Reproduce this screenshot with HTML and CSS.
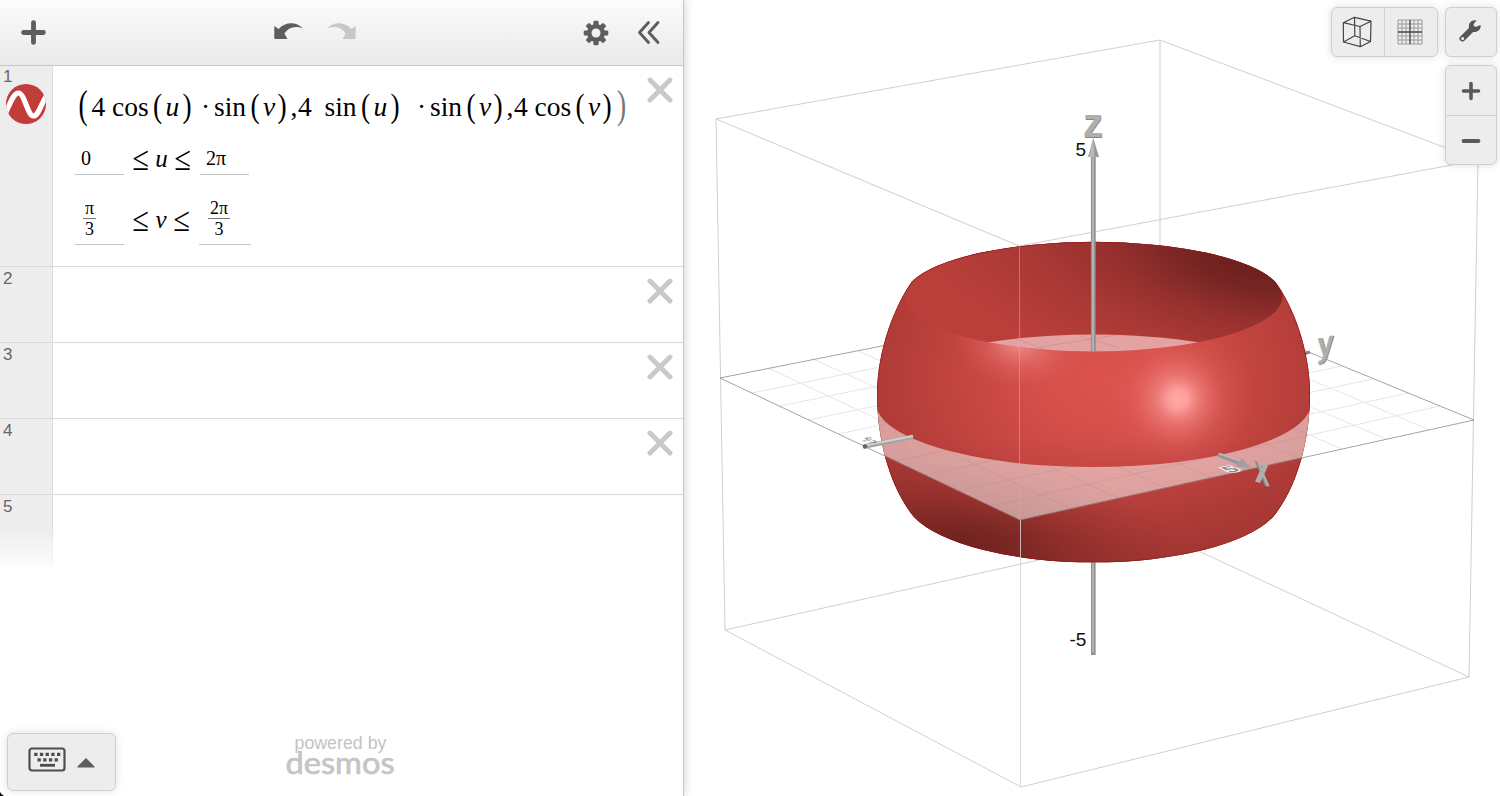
FILE: index.html
```
<!DOCTYPE html>
<html lang="en">
<head>
<meta charset="utf-8">
<title>Desmos 3D</title>
<link rel="stylesheet" href="styles.css">
</head>
<body>
<svg class="defs" width="0" height="0">
  <symbol id="close" viewBox="0 0 26 26"><path d="M3 3 23 23M23 3 3 23" stroke="#c9c9c9" stroke-width="4.900" stroke-linecap="round"/></symbol>
</svg>
<div class="app">
  <section class="panel">
    <header class="toolbar">
      <svg class="ic-add" width="25" height="25" viewBox="0 0 25 25"><path d="M12.500 2.600V22.400M2.600 12.500H22.400" stroke="#5d5d5d" stroke-width="4.800" stroke-linecap="round"/></svg>
      <svg class="ic-undo" width="30" height="18" viewBox="0 0 30 18"><path d="M.3 4 4.600 7C11 0 22-1 29 6.500 21 3.500 15 5 10.300 11.500L13.500 17H1.200Q.3 17 .3 16Z" fill="#5d5d5d"/></svg>
      <svg class="ic-redo" width="30" height="18" viewBox="0 0 30 18"><path d="M29.700 4 25.400 7C19 0 8-1 1 6.500 9 3.500 15 5 19.700 11.500L16.500 17H28.800Q29.700 17 29.700 16Z" fill="#c8c8c8"/></svg>
      <svg class="ic-gear" width="26" height="26" viewBox="-13 -13 26 26"><g fill="#5d5d5d"><circle r="9"/><g id="t"><rect x="-2.600" y="-12.300" width="5.200" height="24.600" rx="1.300"/><rect x="-12.300" y="-2.600" width="24.600" height="5.200" rx="1.300"/></g><use href="#t" transform="rotate(45)"/></g><circle r="4.500" fill="#f2f2f2"/></svg>
      <svg class="ic-chev" width="24" height="25" viewBox="0 0 24 25"><path d="M11.500 2.500 2.500 12.500 11.500 22.500M21 2.500 12 12.500 21 22.500" fill="none" stroke="#5d5d5d" stroke-width="2.900" stroke-linecap="round" stroke-linejoin="round"/></svg>
    </header>
    <div class="row first">
      <div class="gutter"><span class="num">1</span>
        <svg class="badge" width="42" height="42" viewBox="0 0 42 42"><defs><clipPath id="bc"><circle cx="21" cy="21" r="20"/></clipPath></defs><circle cx="21" cy="21" r="20" fill="#c23d3a"/><path clip-path="url(#bc)" d="M0 31C5 22 8 10 13.500 10 19.500 10 22.500 33 28.500 33 33.500 33 36 21 42 12" fill="none" stroke="#fff" stroke-width="5.200"/></svg>
      </div>
      <div class="expr">
        <div class="formula"><span class="w13 p big">(</span><span class="w20">4</span><span class="w41">cos</span><span class="w12 p">(</span><span class="w17 i">u</span><span class="w19 p">)</span><span class="w13">·</span><span class="w37">sin</span><span class="w12 p">(</span><span class="w15 i">v</span><span class="w13 p">)</span><span class="w7">,</span><span class="w27">4</span><span class="w37">sin</span><span class="w12 p">(</span><span class="w17 i">u</span><span class="w26 p">)</span><span class="w13">·</span><span class="w37">sin</span><span class="w12 p">(</span><span class="w15 i">v</span><span class="w13 p">)</span><span class="w7">,</span><span class="w20">4</span><span class="w41">cos</span><span class="w12 p">(</span><span class="w15 i">v</span><span class="w15 p">)</span><span class="w13 p big ghost">)</span></div>
        <div class="domain d1"><span class="bound">0</span><span class="rel"><b>≤</b><i>u</i><b>≤</b></span><span class="bound">2π</span></div>
        <div class="domain d2"><span class="bound fr"><span class="frac"><b>π</b><b>3</b></span></span><span class="rel"><b>≤</b><i>v</i><b>≤</b></span><span class="bound fr wide"><span class="frac"><b>2π</b><b>3</b></span></span></div>
      </div>
      <svg class="x" width="26" height="26"><use href="#close"/></svg>
    </div>
    <div class="row"><div class="gutter"><span class="num">2</span></div><div class="expr"></div><svg class="x" width="26" height="26"><use href="#close"/></svg></div>
    <div class="row"><div class="gutter"><span class="num">3</span></div><div class="expr"></div><svg class="x" width="26" height="26"><use href="#close"/></svg></div>
    <div class="row"><div class="gutter"><span class="num">4</span></div><div class="expr"></div><svg class="x" width="26" height="26"><use href="#close"/></svg></div>
    <div class="row last"><div class="gutter"><span class="num">5</span></div><div class="expr"></div></div>
    <footer class="foot">
      <div class="keypad">
        <svg width="38" height="25" viewBox="0 0 38 25"><rect x="1.500" y="1.500" width="35" height="22" rx="2.500" fill="none" stroke="#4d4d4d" stroke-width="2.200"/><path d="M6.200 7.300H32.500M9.500 12.800H30" stroke="#4d4d4d" stroke-width="3.200" stroke-dasharray="3.300 2.400"/><path d="M12 18.300H27" stroke="#4d4d4d" stroke-width="2.800"/></svg>
        <svg width="18" height="10" viewBox="0 0 18 10"><path d="M9 0 17.500 8.500Q18 9.500 17 9.500H1Q0 9.500.5 8.500Z" fill="#5d5d5d"/></svg>
      </div>
      <div class="brand"><span>powered by</span>
        <svg width="112" height="28" viewBox="0 0 112 28"><text class="logo" x="0.500" y="25" textLength="109" lengthAdjust="spacingAndGlyphs">desmos</text></svg>
      </div>
    </footer>
  </section>
  <main class="view">
    <svg class="scene" width="816" height="796" viewBox="684 0 816 796">
      <defs>
        <radialGradient id="inner" gradientUnits="userSpaceOnUse" cx="0" cy="0" r="1" gradientTransform="translate(1248 262) rotate(12) scale(350 140)">
          <stop offset="0" stop-color="#6a1f1c"/><stop offset=".18" stop-color="#772523"/><stop offset=".42" stop-color="#97312e"/><stop offset=".65" stop-color="#a93834"/><stop offset="1" stop-color="#ba3f3b"/></radialGradient>
        <radialGradient id="outer" gradientUnits="userSpaceOnUse" cx="0" cy="0" r="1" gradientTransform="translate(1105 378) scale(228 185)">
          <stop offset="0" stop-color="#dd534e"/><stop offset=".3" stop-color="#d54f4a"/><stop offset=".65" stop-color="#c24440"/><stop offset="1" stop-color="#b03b37"/></radialGradient>
        <radialGradient id="spot" gradientUnits="userSpaceOnUse" cx="1178" cy="399" r="80">
          <stop offset="0" stop-color="#ffaaa8"/><stop offset=".12" stop-color="#ffa5a3" stop-opacity=".92"/><stop offset=".3" stop-color="#f78a87" stop-opacity=".62"/><stop offset=".6" stop-color="#e96a66" stop-opacity=".26"/><stop offset="1" stop-color="#dc524d" stop-opacity="0"/></radialGradient>
        <radialGradient id="spot2" gradientUnits="userSpaceOnUse" cx="0" cy="0" r="1" gradientTransform="translate(1018 345) rotate(12) scale(68 46)">
          <stop offset="0" stop-color="#f59a96" stop-opacity=".8"/><stop offset=".45" stop-color="#e97874" stop-opacity=".42"/><stop offset="1" stop-color="#dc524d" stop-opacity="0"/></radialGradient>
        <radialGradient id="shade" gradientUnits="userSpaceOnUse" cx="0" cy="0" r="1" gradientTransform="translate(965 543) rotate(8) scale(240 92)">
          <stop offset="0" stop-color="#5e1b18" stop-opacity=".76"/><stop offset=".25" stop-color="#66201c" stop-opacity=".63"/><stop offset=".6" stop-color="#7f2724" stop-opacity=".36"/><stop offset="1" stop-color="#8f2f2b" stop-opacity="0"/></radialGradient>
        <linearGradient id="under" x1="0" y1="440" x2="0" y2="562" gradientUnits="userSpaceOnUse"><stop offset="0" stop-color="#8f2f2b" stop-opacity="0"/><stop offset="1" stop-color="#8f2f2b" stop-opacity=".4"/></linearGradient>
        <path id="shape" d="M912 281.500C895 305 877 350 877 394 877 440 890 488 914 517A189 66 0 0 0 1273 517C1297 488 1310 440 1310 394 1310 350 1293 305 1275 281.500A189 55 0 0 0 912 281.500Z"/>
        <clipPath id="body"><use href="#shape"/></clipPath>
        <clipPath id="band"><path d="M876 403A217 64 0 0 0 1311 403V456L1301 458 1020 520 885 456H870Z"/></clipPath>
        <clipPath id="rim"><ellipse cx="1093.500" cy="296.500" rx="189" ry="55"/></clipPath>
        <clipPath id="lens"><ellipse cx="1093.500" cy="397" rx="217" ry="62.500"/></clipPath>
        <g id="grid" fill="none" stroke-width="1">
          <path d="M752 393 1192 304M780 406 1221 316M808 420 1250 328M838 434 1279 340M865 447 1309 352M895 461 1342 366M926 475 1373 379M958 491 1408 393M991 506 1440 406"/>
          <path d="M768 368 1071 509M813 359 1119 498M858 351 1166 488M902 342 1212 478M946 333 1255 468M990 325 1299 458M1033 316 1342 449M1076 307 1386 439M1118 299 1430 430"/>
        </g>
      </defs>
      <g fill="none" stroke="#cfcfcf">
        <path d="M716 119 1160 40 1478 160 1019 246ZM716 119 725 630 1021 787 1469 677 1478 160M1160 40V533M725 630 1160 533 1469 677"/>
      </g>
      <use href="#grid" stroke="#e6e6e6"/>
      <path d="M720 378 1160 291 1474 420 1020 520Z" fill="none" stroke="#a3a3a3"/>
      <path d="M1300 355 1310 352" stroke="#888" stroke-width="3"/>
      <path d="M1093.300 555V655" stroke="#8e8e8e" stroke-width="4.600"/><path d="M1093 555V653" stroke="#b0b0b0" stroke-width="2"/>
      <g clip-path="url(#body)">
        <rect x="870" y="230" width="450" height="340" fill="url(#outer)"/>
        <rect x="870" y="440" width="450" height="130" fill="url(#under)"/>
        <rect x="870" y="400" width="450" height="170" fill="url(#shade)"/>
        <rect x="1080" y="310" width="200" height="180" fill="url(#spot)"/>
        <rect x="930" y="290" width="170" height="120" fill="url(#spot2)"/>
        <ellipse cx="1093.500" cy="296.500" rx="189" ry="55" fill="url(#inner)"/>
        <g clip-path="url(#rim)"><ellipse cx="1093.500" cy="397" rx="217" ry="62.500" fill="#e4a3a2"/><g clip-path="url(#lens)"><path d="M1015 338 1048 351M1040 347 1130 333M1080 336 1120 348" stroke="#cf9694"/></g></g>
        <use href="#shape" fill="none" stroke="#8f1715" stroke-width="1.200"/>
        <g clip-path="url(#band)"><rect x="870" y="390" width="450" height="140" fill="#fff" opacity=".51"/><use href="#grid" stroke="#b88482" stroke-opacity=".3"/></g>
      </g>
      <path d="M885 456 1020 520 1301 458" fill="none" stroke="#987170"/>
      <path d="M1019.500 246V520" stroke="#d0aaa7" stroke-opacity=".55"/>
      <path d="M1020.500 520V787" stroke="#d6d0d0" stroke-opacity=".85"/>
      <path d="M1093.300 155V351" stroke="#8c8c8c" stroke-width="4.800"/><path d="M1093 155V351" stroke="#b1b1b1" stroke-width="2.400"/>
      <path d="M1093.300 138 1099 157H1088Z" fill="#999"/><path d="M1093.300 138 1094.500 157H1089Z" fill="#b9b9b9"/>
      <path d="M864 446.500 913 437" stroke="#a5a5a5" stroke-width="4.800"/><path d="M866 445.300 913 436" stroke="#cfcfcf" stroke-width="2"/><circle cx="865" cy="446.500" r="2.300" fill="#666"/>
      <text class="tick" transform="matrix(.95 -.02 .5 .45 864 443)">-5</text>
      <g class="flat"><text transform="matrix(1.200 -.2 .9 .4 1230 472.500)">5</text></g>
      <path d="M1218 454.500 1240 463" stroke="#969696" stroke-width="4.500"/><path d="M1219 453.500 1240 461" stroke="#bbb" stroke-width="1.500"/>
      <path d="M1242 458 1251 469 1235 466Z" fill="#a0a0a0"/>
      <g class="axis"><text class="dark" x="1083.500" y="137.500" font-size="40">z</text><text x="1083" y="136.500" font-size="40">z</text>
        <text class="dark" transform="matrix(.85 -.18 -.03 1.050 1318 358)" font-size="34">y</text><text transform="matrix(.85 -.18 -.03 1.050 1317 357.500)" font-size="34">y</text>
        <path class="dark" d="M1254.500 460.500 1259 463 1269.500 487 1265 486Z"/><path d="M1263.500 463.500 1268 466 1260 483 1255 481.500Z"/><path d="M1256.500 461 1259.500 463 1269.500 486 1266.500 486Z"/></g>
      <g class="label"><text x="1075.500" y="156">5</text><text x="1069.500" y="645.500">-5</text></g>
    </svg>
    <div class="controls">
      <div class="top">
        <div class="pair"><div>
          <svg width="32" height="32" viewBox="0 0 32 32"><path d="M2.300 6.700 13.500 1.300 30 5.200 19 10.500ZM2.300 6.700 2.500 26 19.300 30.700 19 10.500M30 5.200 29.500 25.500 19.300 30.700M13.500 1.300 13.800 19.800 29.500 25.500M13.800 19.800 2.500 26" fill="none" stroke="#444" stroke-width="1.200" stroke-linejoin="round"/></svg>
        </div><div>
          <svg width="26" height="26" viewBox="0 0 26 26"><path d="M1 1H25V25H1ZM5 1V25M9 1V25M17 1V25M21 1V25M1 5H25M1 9H25M1 17H25M1 21H25" fill="none" stroke="#999" stroke-width="1"/><path d="M13 1V25M1 13H25" stroke="#444" stroke-width="1.300"/></svg>
        </div></div>
        <div class="wrench"><svg width="24" height="24" viewBox="0 0 24 24"><path d="M4.500 19.500 14 10" stroke="#555" stroke-width="6" stroke-linecap="round"/><path d="M18.500 1.500C14 .3 10 4 11 9L15 13C20 13.500 23.500 10 22.500 6L17.500 8 15.500 6.500 16 4.500Z" fill="#555"/><circle cx="4.600" cy="19.400" r="1.500" fill="#ededed"/></svg></div>
      </div>
      <div class="zoom">
        <div><svg width="20" height="20" viewBox="0 0 20 20"><path d="M10 2.500V17.500M2.500 10H17.500" stroke="#5a5a5a" stroke-width="3.600" stroke-linecap="round"/></svg></div>
        <div><svg width="20" height="20" viewBox="0 0 20 20"><path d="M2.500 10H17.500" stroke="#5a5a5a" stroke-width="3.800" stroke-linecap="round"/></svg></div>
      </div>
    </div>
  </main>
</div>
</body>
</html>
```
FILE: styles.css
```
* { box-sizing: border-box; }
body { margin: 0; background: #fff; font-family: "Liberation Sans", Arial, sans-serif; overflow: hidden; }
svg { display: block; flex: none; overflow: visible; }
.defs { position: absolute; }
.app { display: flex; width: 1500px; height: 796px; }
.panel { display: flex; flex-direction: column; width: 684px; border-right: 1px solid #c6c6c6; box-shadow: 0 0 10px rgba(0,0,0,.2); background: #fff; z-index: 1; }
.toolbar { display: flex; align-items: center; height: 66px; padding-left: 20.600px; border-bottom: 1px solid #c8c8c8; background: linear-gradient(#fcfcfc, #e9e9e9); flex: none; }
.ic-undo { margin-left: 228.400px; margin-top: -4px; }
.ic-redo { margin-left: 22.500px; margin-top: -4px; }
.ic-gear { margin-left: 227px; }
.ic-chev { margin-left: 28px; }
.row { display: flex; height: 76px; border-bottom: 1px solid #d9d9d9; flex: none; }
.row.first { height: 201px; }
.row.last { border: 0; }
.gutter { width: 53px; background: #ededed; border-right: 1px solid #dcdcdc; padding: 3px 0 0 3px; flex: none; }
.first .gutter { padding-top: 2px; }
.last .gutter { background: linear-gradient(#ededed 45%, #fff); border-image: linear-gradient(#dcdcdc 40%, #fff) 1; border-width: 0 1px 0 0; border-style: solid; }
.num { display: block; font-size: 17px; line-height: 18px; color: #666; }
.badge { margin: -3px 0 0 2px; }
.expr { flex: 1; }
.x { margin: 11px 10px 0 0; }
.formula { display: flex; height: 41px; margin: 20px 0 0 25.500px; font: 27.500px/41px "Liberation Serif", "Times New Roman", serif; color: #000; white-space: nowrap; width: 550px; }
.formula span { display: block; flex: none; }
.i { font-style: italic; }
.formula .p { transform: scaleY(1.22); transform-origin: 50% 60%; }
.formula .big { transform: scaleY(1.45); }
.ghost { color: #777; }
.w7 { width: 7.500px; } .w12 { width: 12.500px; } .w13 { width: 13px; } .w15 { width: 14.500px; }
.w17 { width: 17px; } .w19 { width: 18.500px; } .w20 { width: 20.500px; } .w26 { width: 26.500px; }
.w27 { width: 26.500px; } .w37 { width: 36.500px; } .w41 { width: 41px; }
.domain { display: flex; padding-left: 22px; font-family: "Liberation Serif", "Times New Roman", serif; color: #000; }
.d1 { height: 34px; margin-top: 14px; }
.d2 { height: 50px; margin-top: 20px; }
.bound { width: 49px; padding-left: 6px; border-bottom: 1px solid #c4c4c4; font-size: 20px; line-height: 35px; }
.rel { display: flex; justify-content: space-between; width: 57px; margin: 0 10px 0 9px; font-size: 28px; line-height: 35px; }
.rel b { font-weight: 400; transform: scale(1.080, 1.220); }
.rel i { font-size: 25px; line-height: 36px; }
.d2 .rel { width: 56px; line-height: 49px; }
.d2 .rel i { line-height: 49px; }
.fr { display: flex; align-items: flex-start; padding: 4px 0 0 8px; }
.wide { width: 52px; margin-left: 0; padding-left: 9px; }
.frac { display: grid; font-size: 18px; line-height: 19px; text-align: center; }
.frac b { font-weight: 400; padding: 0 2px; }
.frac b + b { border-top: 1px solid #777; padding-top: 1px; }
.foot { display: flex; margin-top: auto; height: 64px; background: radial-gradient(circle at 7px 0, transparent 7px, #000 8px) 0 57px / 5px 7px no-repeat; flex: none; }
.keypad { display: flex; align-items: center; width: 109px; height: 58px; margin: 1px 0 0 7px; padding: 0 0 5px 20px; gap: 11px; border: 1px solid #cfcfcf; border-radius: 6px; background: #ededed; box-shadow: 0 0 8px rgba(0,0,0,.12); }
.keypad svg + svg { margin-top: 6px; }
.brand { margin: 2px 0 0 169px; color: #c3c3c3; font-size: 17.800px; line-height: 18px; }
.brand span { display: block; margin-left: 9.500px; }
.brand svg { margin-top: -3px; }
.logo { font: 30px Lato, sans-serif; fill: #c5c5c5; stroke: #c5c5c5; stroke-width: .7px; }
.view { position: relative; flex: 1; }
.label { font: 19px "Liberation Sans", Arial, sans-serif; fill: #111; }
.tick { font: 17px "Liberation Sans", Arial, sans-serif; fill: #777; }
.flat { font: bold 17px "Liberation Sans", Arial, sans-serif; fill: #888; stroke: #f2eded; stroke-width: 3px; paint-order: stroke; }
.axis { font-family: "Liberation Sans", Arial, sans-serif; font-weight: 700; fill: #aeaeae; }
.axis .dark { fill: #868686; }
.controls { position: absolute; top: 7px; right: 3px; display: flex; flex-direction: column; align-items: flex-end; gap: 8px; }
.top { display: flex; gap: 7px; }
.pair, .wrench, .zoom { display: flex; border: 1px solid #cfcfcf; border-radius: 6px; background: #ededed; box-shadow: 0 0 8px rgba(0,0,0,.13); }
.pair { width: 107px; height: 50px; }
.pair div, .zoom div { display: flex; flex: 1; align-items: center; justify-content: center; }
.pair svg { margin: -1px 0 0 -2px; }
.pair div + div { border-left: 1px solid #d2d2d2; }
.wrench { width: 52px; height: 50px; align-items: center; justify-content: center; }
.wrench svg { margin: -2px 0 0 -2px; }
.pair { margin-left: -1px; }
.zoom { flex-direction: column; width: 52px; height: 100px; }
.zoom svg { margin: 2px 0 0 -1px; }
.zoom div + div { border-top: 1px solid #d2d2d2; }
```
